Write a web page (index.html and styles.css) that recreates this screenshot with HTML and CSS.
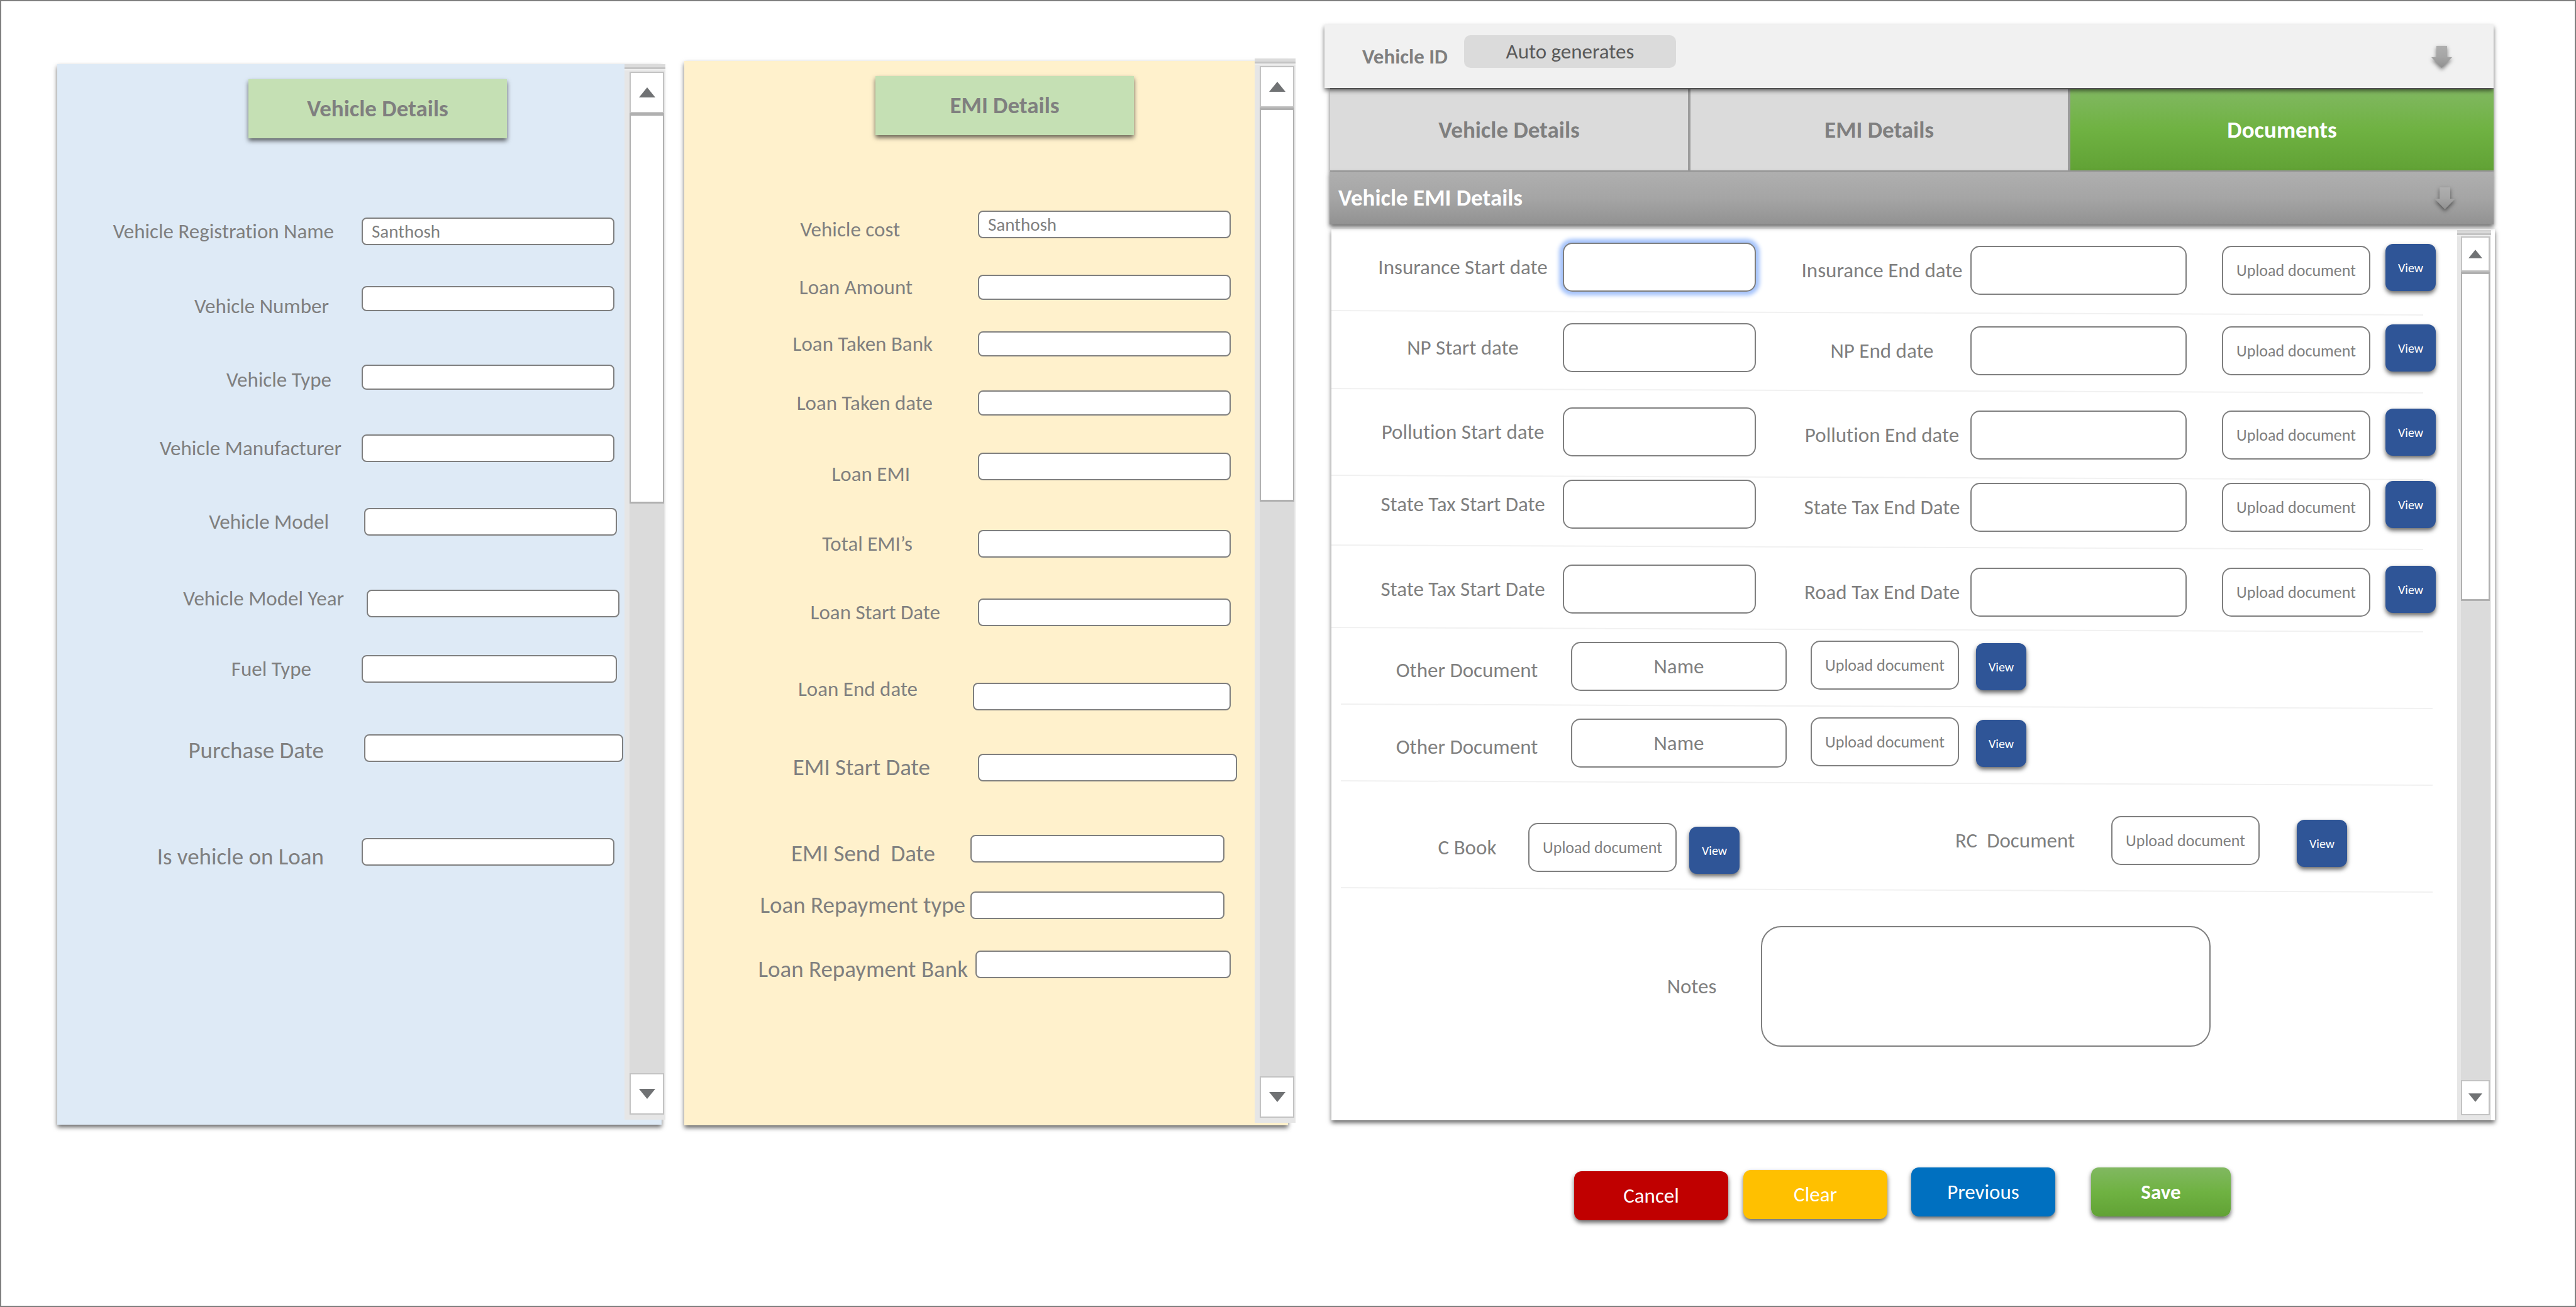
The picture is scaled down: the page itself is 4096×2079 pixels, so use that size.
FILE: index.html
```html
<!DOCTYPE html>
<html lang="en">
<head>
<meta charset="utf-8">
<title>Vehicle Details</title>
<link rel="stylesheet" href="styles.css">
</head>
<body>
<main class="page">

  <section class="panel panel-vehicle">
    <form class="panel-form">
      <h2 class="panel-title">Vehicle Details</h2>
      <div class="fields fields-vehicle">
        <div class="field"><label class="gap-44" for="v-name">Vehicle Registration Name</label><input id="v-name" type="text" value="Santhosh"></div>
        <div class="field"><label class="gap-52 down-3" for="v-number">Vehicle Number</label><input class="slim" id="v-number" type="text"></div>
        <div class="field"><label class="gap-48 down-1" for="v-type">Vehicle Type</label><input class="slim" id="v-type" type="text"></div>
        <div class="field"><label class="gap-32" for="v-maker">Vehicle Manufacturer</label><input id="v-maker" type="text"></div>
        <div class="field"><label class="gap-52" for="v-model">Vehicle Model</label><input class="start-4 end-12" id="v-model" type="text"></div>
        <div class="field"><label class="gap-28 up-2" for="v-year">Vehicle Model Year</label><input class="start-8 end-8" id="v-year" type="text"></div>
        <div class="field"><label class="gap-80" for="v-fuel">Fuel Type</label><input class="end-12" id="v-fuel" type="text"></div>
        <div class="field field-large"><label class="gap-60 down-1" for="v-bought">Purchase Date</label><input class="start-4 end-2" id="v-bought" type="text"></div>
        <div class="field field-large"><label class="gap-60 down-2" for="v-loan">Is vehicle on Loan</label><input id="v-loan" type="text"></div>
      </div>
    </form>
    <div class="scrollbar">
      <button type="button" class="scroll-btn" aria-label="Scroll up"><svg viewBox="0 0 26 16"><path d="M13 0 26 16H0Z"/></svg></button>
      <div class="scroll-thumb"></div>
      <div class="scroll-track"></div>
      <button type="button" class="scroll-btn" aria-label="Scroll down"><svg viewBox="0 0 26 16"><path d="M0 0H26L13 16Z"/></svg></button>
    </div>
  </section>

  <section class="panel panel-emi">
    <form class="panel-form">
      <h2 class="panel-title">EMI Details</h2>
      <div class="fields fields-emi">
        <div class="field"><label class="gap-112 down-2" for="e-cost">Vehicle cost</label><input class="start-12" id="e-cost" type="text" value="Santhosh"></div>
        <div class="field"><label class="gap-92" for="e-amount">Loan Amount</label><input class="start-12 slim" id="e-amount" type="text"></div>
        <div class="field"><label class="gap-60" for="e-bank">Loan Taken Bank</label><input class="start-12 slim" id="e-bank" type="text"></div>
        <div class="field"><label class="gap-60" for="e-taken">Loan Taken date</label><input class="start-12 slim" id="e-taken" type="text"></div>
        <div class="field"><label class="gap-96 down-3" for="e-emi">Loan EMI</label><input class="start-12" id="e-emi" type="text"></div>
        <div class="field"><label class="gap-92" for="e-total">Total EMI’s</label><input class="start-12" id="e-total" type="text"></div>
        <div class="field"><label class="gap-48" for="e-start">Loan Start Date</label><input class="start-12" id="e-start" type="text"></div>
        <div class="field"><label class="gap-84 up-3" for="e-end">Loan End date</label><input class="start-4" id="e-end" type="text"></div>
        <div class="field field-large"><label class="gap-64" for="e-emistart">EMI Start Date</label><input class="start-12 end-28" id="e-emistart" type="text"></div>
        <div class="field field-large"><label class="gap-56 down-2" for="e-send">EMI Send  Date</label><input class="end-48" id="e-send" type="text"></div>
        <div class="field field-large"><label class="gap-8" for="e-rtype">Loan Repayment type</label><input class="end-48" id="e-rtype" type="text"></div>
        <div class="field field-large"><label class="gap-4 down-2" for="e-rbank">Loan Repayment Bank</label><input class="start-8" id="e-rbank" type="text"></div>
      </div>
    </form>
    <div class="scrollbar">
      <button type="button" class="scroll-btn" aria-label="Scroll up"><svg viewBox="0 0 26 16"><path d="M13 0 26 16H0Z"/></svg></button>
      <div class="scroll-thumb"></div>
      <div class="scroll-track"></div>
      <button type="button" class="scroll-btn" aria-label="Scroll down"><svg viewBox="0 0 26 16"><path d="M0 0H26L13 16Z"/></svg></button>
    </div>
  </section>

  <section class="record">
    <header class="record-head">
      <label for="vehicle-id">Vehicle ID</label>
      <input id="vehicle-id" type="text" value="Auto generates" readonly>
      <svg class="arrow" viewBox="0 0 33 35"><defs><linearGradient id="steel" x1="0" y1="0" x2="0" y2="1"><stop offset="0" stop-color="#afafaf"/><stop offset=".5" stop-color="#a5a5a5"/><stop offset="1" stop-color="#8f8f8f"/></linearGradient></defs><path fill="url(#steel)" d="M8 0H25V18H33L16.500 35 0 18H8Z"/></svg>
    </header>
    <nav class="tabs">
      <button type="button" class="tab">Vehicle Details</button>
      <button type="button" class="tab">EMI Details</button>
      <button type="button" class="tab tab-active">Documents</button>
    </nav>
    <div class="section-bar">
      <h2>Vehicle EMI Details</h2>
      <svg class="arrow" viewBox="0 0 33 35"><path fill="url(#steel)" d="M8 0H25V18H33L16.500 35 0 18H8Z"/></svg>
    </div>

    <div class="sheet">
      <form class="documents" id="documents">
        <div class="entry">
          <div class="period">
            <label for="ins-start">Insurance Start date</label><input class="active" id="ins-start" type="text">
            <label class="late" for="ins-end">Insurance End date</label><input class="late" id="ins-end" type="text">
            <button type="button" class="upload late">Upload document</button><button type="button" class="view">View</button>
          </div>
          <svg class="rule rule-far" viewBox="0 0 1738 9" preserveAspectRatio="none"><path d="M0 1 1738 8"/></svg>
        </div>
        <div class="entry">
          <div class="period">
            <label for="np-start">NP Start date</label><input id="np-start" type="text">
            <label class="late" for="np-end">NP End date</label><input class="late" id="np-end" type="text">
            <button type="button" class="upload late">Upload document</button><button type="button" class="view">View</button>
          </div>
          <svg class="rule" viewBox="0 0 1738 9" preserveAspectRatio="none"><path d="M0 1 1738 8"/></svg>
        </div>
        <div class="entry">
          <div class="period">
            <label for="pol-start">Pollution Start date</label><input id="pol-start" type="text">
            <label class="late" for="pol-end">Pollution End date</label><input class="late" id="pol-end" type="text">
            <button type="button" class="upload late">Upload document</button><button type="button" class="view">View</button>
          </div>
          <svg class="rule rule-far" viewBox="0 0 1738 9" preserveAspectRatio="none"><path d="M0 1 1738 8"/></svg>
        </div>
        <div class="entry">
          <div class="period">
            <label for="st-start">State Tax Start Date</label><input id="st-start" type="text">
            <label class="late" for="st-end">State Tax End Date</label><input class="late" id="st-end" type="text">
            <button type="button" class="upload late">Upload document</button><button type="button" class="view">View</button>
          </div>
          <svg class="rule" viewBox="0 0 1738 9" preserveAspectRatio="none"><path d="M0 1 1738 8"/></svg>
        </div>
        <div class="entry">
          <div class="period">
            <label for="rt-start">State Tax Start Date</label><input id="rt-start" type="text">
            <label class="late" for="rt-end">Road Tax End Date</label><input class="late" id="rt-end" type="text">
            <button type="button" class="upload late">Upload document</button><button type="button" class="view">View</button>
          </div>
          <svg class="rule rule-near" viewBox="0 0 1738 9" preserveAspectRatio="none"><path d="M0 1 1738 8"/></svg>
        </div>
        <div class="entry">
          <div class="other">
            <label for="other-1">Other Document</label><input id="other-1" type="text" value="Name">
            <button type="button" class="upload">Upload document</button><button type="button" class="view">View</button>
          </div>
          <svg class="rule rule-inset" viewBox="0 0 1738 9" preserveAspectRatio="none"><path d="M0 1 1738 8"/></svg>
        </div>
        <div class="entry">
          <div class="other">
            <label for="other-2">Other Document</label><input id="other-2" type="text" value="Name">
            <button type="button" class="upload">Upload document</button><button type="button" class="view">View</button>
          </div>
          <svg class="rule rule-inset" viewBox="0 0 1738 9" preserveAspectRatio="none"><path d="M0 1 1738 8"/></svg>
        </div>
        <div class="entry">
          <div class="books">
            <div class="book book-c">
              <label for="c-book">C Book</label>
              <button type="button" class="upload" id="c-book">Upload document</button><button type="button" class="view">View</button>
            </div>
            <div class="book book-rc">
              <label for="rc-doc">RC  Document</label>
              <button type="button" class="upload" id="rc-doc">Upload document</button><button type="button" class="view">View</button>
            </div>
          </div>
          <svg class="rule rule-far rule-inset" viewBox="0 0 1738 9" preserveAspectRatio="none"><path d="M0 1 1738 8"/></svg>
        </div>
        <div class="notes">
          <label for="notes">Notes</label>
          <textarea id="notes"></textarea>
        </div>
      </form>
      <div class="scrollbar">
        <button type="button" class="scroll-btn" aria-label="Scroll up"><svg viewBox="0 0 26 16"><path d="M13 0 26 16H0Z"/></svg></button>
        <div class="scroll-thumb"></div>
        <div class="scroll-track"></div>
        <button type="button" class="scroll-btn" aria-label="Scroll down"><svg viewBox="0 0 26 16"><path d="M0 0H26L13 16Z"/></svg></button>
      </div>
    </div>

    <footer class="actions">
      <button type="button" class="action cancel">Cancel</button>
      <button type="button" class="action clear">Clear</button>
      <button type="button" class="action previous">Previous</button>
      <button type="submit" form="documents" class="action save">Save</button>
    </footer>
  </section>

</main>
</body>
</html>
```
FILE: styles.css
```css
:root {
  --ink: #7f7f7f;
  --line: #7f7f7f;
  --lift: 0 4px 7px rgba(0, 0, 0, .6);
  --text: 33px;
  --text-large: 37px;
  --text-value: 29px;
  --text-small: 26px;
  --text-tiny: 20px;
}

* { box-sizing: border-box; }

body {
  margin: 0;
  background: #fff;
  color: var(--ink);
  font: var(--text)/36px Carlito, Lato, sans-serif;
  font-variant-ligatures: none;
}

h2 { margin: 0; font-size: var(--text-large); font-weight: 700; }

input, textarea, button {
  margin: 0;
  font-family: inherit;
  color: inherit;
}

input, textarea {
  min-width: 0;
  border: 2px solid var(--line);
  background: #fff;
  outline: none;
}

label { white-space: pre; }

.page {
  display: grid;
  grid-template-columns: 961fr 960fr 1881fr;
  align-items: start;
  gap: 36px;
  min-height: 100vh;
  padding: 37px 129px 37px 89px;
  border: 2px solid var(--line);
}

/* Side panels */

.panel {
  display: flex;
  box-shadow: var(--lift);
}

.panel-vehicle { margin-top: 63px; background: #deeaf6; }
.panel-emi { margin-top: 58px; background: #fff1cc; }

.panel-form { flex: 1; padding-top: 24px; }

.panel-title {
  width: 411px;
  margin: 0 0 0 304px;
  background: #c5e0b4;
  box-shadow: var(--lift);
  line-height: 94px;
  text-align: center;
}

.fields { display: grid; }

.fields-vehicle {
  grid-template-rows: 107px 125px 113px 117px 130px 104px 126px 165px 44px;
  padding: 126px 0 412px;
}

.fields-emi {
  grid-template-rows: 100px 90px 94px 101px 123px 109px 134px 113px 129px 90px 94px 44px;
  padding: 120px 0 234px;
}

.field {
  display: flex;
  align-items: center;
  height: 44px;
}

.field label { flex: none; text-align: right; }
.fields-vehicle label { width: 484px; }
.fields-emi label { width: 455px; }
.field-large { font-size: var(--text-large); }

.field input {
  flex: 1;
  height: 44px;
  margin-right: 16px;
  padding: 0 14px;
  border-radius: 8px;
  font-size: var(--text-value);
}

.fields-emi input { margin-right: 38px; }
.field .slim { height: 40px; }

.field .start-4 { margin-left: 4px; }
.field .start-8 { margin-left: 8px; }
.field .start-12 { margin-left: 12px; }
.field .end-2 { margin-right: 2px; }
.field .end-8 { margin-right: 8px; }
.field .end-12 { margin-right: 12px; }
.field .end-28 { margin-right: 28px; }
.field .end-48 { margin-right: 48px; }

.gap-4 { padding-right: 4px; }
.gap-8 { padding-right: 8px; }
.gap-28 { padding-right: 28px; }
.gap-32 { padding-right: 32px; }
.gap-44 { padding-right: 44px; }
.gap-48 { padding-right: 48px; }
.gap-52 { padding-right: 52px; }
.gap-56 { padding-right: 56px; }
.gap-60 { padding-right: 60px; }
.gap-64 { padding-right: 64px; }
.gap-80 { padding-right: 80px; }
.gap-84 { padding-right: 84px; }
.gap-92 { padding-right: 92px; }
.gap-96 { padding-right: 96px; }
.gap-112 { padding-right: 112px; }

.down-1 { padding-top: 8px; }
.down-2 { padding-top: 16px; }
.down-3 { padding-top: 24px; }
.up-2 { padding-bottom: 16px; }
.up-3 { padding-bottom: 24px; }

/* Scrollbars */

.scrollbar {
  display: flex;
  flex: none;
  flex-direction: column;
  width: 65px;
  margin: 0 -6px 8px 0;
  padding: 12px 2px 8px 8px;
  background: linear-gradient(#dbdbdb 5px, #c4c4c4 5px 8px, #efefef 8px 10px, #e6e6e6 10px);
}

.panel-emi .scrollbar { margin: -4px -12px 4px 0; }

.scroll-btn {
  display: flex;
  flex: none;
  align-items: center;
  justify-content: center;
  height: 66px;
  padding: 0;
  border: 2px solid #c3c3c3;
  background: #fff;
}

.scroll-btn svg { width: 26px; height: 16px; fill: #707274; }

.scroll-thumb {
  flex: 404;
  border: 3px solid #b0b0b0;
  border-width: 4px 2px 3px;
  background: #fff;
}

.scroll-track { flex: 596; background: #dbdbdb; }

/* Record column */

.record { padding-left: 22px; }

.record-head {
  position: relative;
  z-index: 2;
  display: flex;
  align-items: flex-start;
  height: 101px;
  padding: 17px 66px 0 60px;
  background: #f1f1f1;
  box-shadow: var(--lift);
}

.record-head label {
  width: 162px;
  padding-top: 16px;
  font-weight: 700;
}

.record-head input {
  width: 337px;
  height: 52px;
  border: 0;
  border-radius: 10px;
  background: #dbdbdb;
  color: #595959;
  font-size: var(--text);
  text-align: center;
}

.arrow {
  width: 33px;
  height: 35px;
  margin-left: auto;
  filter: drop-shadow(0 3px 3px rgba(0, 0, 0, .5));
  overflow: visible;
}

.record-head .arrow { margin-top: 17px; }

.tabs {
  display: grid;
  grid-template-columns: 570fr 601fr 674fr;
  gap: 4px;
  margin-left: 9px;
  padding: 2px 0;
  background: #9c9c9c;
  box-shadow: var(--lift);
}

.tab {
  height: 129px;
  padding: 0;
  border: 0;
  background: #dbdbdb;
  font-size: var(--text-large);
  font-weight: 700;
}

.tab-active, .save {
  background: linear-gradient(#81b861, #6fb242 50%, #61a235);
  color: #fff;
}

.section-bar {
  position: relative;
  display: flex;
  align-items: center;
  height: 84px;
  margin-left: 8px;
  padding: 0 61px 0 14px;
  background: linear-gradient(#afafaf, #a5a5a5 50%, #929292);
  box-shadow: var(--lift);
  color: #fff;
}

.sheet {
  display: flex;
  margin: 7px -2px 0 11px;
  padding-top: 2px;
  background: #fff;
  box-shadow: var(--lift);
}

.sheet .scrollbar {
  width: 54px;
  margin: 0 6px 0 0;
  padding: 10px 2px 8px 6px;
}

.sheet .scroll-btn { height: 56px; }
.sheet .scroll-btn svg { width: 22px; height: 14px; }

.documents {
  display: grid;
  flex: 1;
  grid-template-rows: 128px 134px 115px 135px 121px 122px 157px 175px auto;
  padding: 20px 0 117px;
}

.documents input {
  height: 78px;
  border-radius: 15px;
  font-size: var(--text);
  text-align: center;
}

.documents label { line-height: 78px; text-align: center; }

.upload {
  height: 78px;
  padding: 0;
  border: 2px solid var(--line);
  border-radius: 15px;
  background: #fff;
  font-size: var(--text-small);
}

.view {
  height: 75px;
  padding: 0;
  border: 0;
  border-radius: 12px;
  background: #2f5597;
  box-shadow: var(--lift);
  color: #fff;
  font-size: var(--text-tiny);
}

.period {
  display: grid;
  grid-template-columns: 318fr 307fr 341fr 344fr 292fr 104fr;
  align-items: start;
  height: 83px;
  padding: 0 34px 0 50px;
}

.period .late { margin-top: 5px; }
.period label.late { padding-left: 60px; }
.period .upload { margin-left: 56px; }
.period .view { margin: 2px 0 0 24px; }

.documents .active { box-shadow: 0 0 6px 6px #a5c3fb; }

.rule {
  display: block;
  width: 97%;
  height: 9px;
  margin-top: 20px;
  fill: none;
  stroke: #f1f1f1;
  stroke-width: 2px;
}

.rule-far { margin-top: 24px; }
.rule-near { margin-top: 16px; }
.rule-inset { margin-left: 15px; }

.other {
  display: flex;
  align-items: flex-start;
  height: 80px;
  padding-left: 50px;
}

.other label { width: 331px; padding-top: 8px; }
.other input { width: 343px; margin-top: 2px; }
.other .upload { width: 236px; margin-left: 38px; }
.other .view { width: 80px; margin: 4px 0 0 27px; }

.books {
  display: flex;
  align-items: flex-start;
  height: 89px;
}

.book { display: flex; align-items: flex-start; }
.book .upload { width: 236px; }
.book .view { width: 80px; margin-top: 6px; }

.book-c { margin: 11px 0 0 119px; }
.book-c label { width: 194px; }
.book-c .view { margin-left: 20px; }

.book-rc { margin-left: 285px; }
.book-rc label { width: 306px; }
.book-rc .view { margin-left: 59px; }

.notes {
  display: flex;
  align-items: center;
  padding-left: 463px;
}

.notes label { width: 220px; }

.notes textarea {
  width: 715px;
  height: 192px;
  padding: 20px;
  border-radius: 32px;
  font-size: var(--text);
  resize: none;
}

/* Actions */

.actions {
  display: flex;
  align-items: flex-start;
  margin: 75px 0 0 397px;
}

.action {
  width: 229px;
  height: 78px;
  padding: 0;
  border: 0;
  border-radius: 12px;
  box-shadow: var(--lift);
  color: #fff;
  font-size: var(--text);
}

.cancel { width: 245px; margin: 6px 24px 0 0; background: #c00000; }
.clear { margin: 4px 38px 0 0; background: #ffc000; }
.previous { margin-right: 57px; background: #0070c0; }
.save { width: 222px; font-weight: 700; }
```
